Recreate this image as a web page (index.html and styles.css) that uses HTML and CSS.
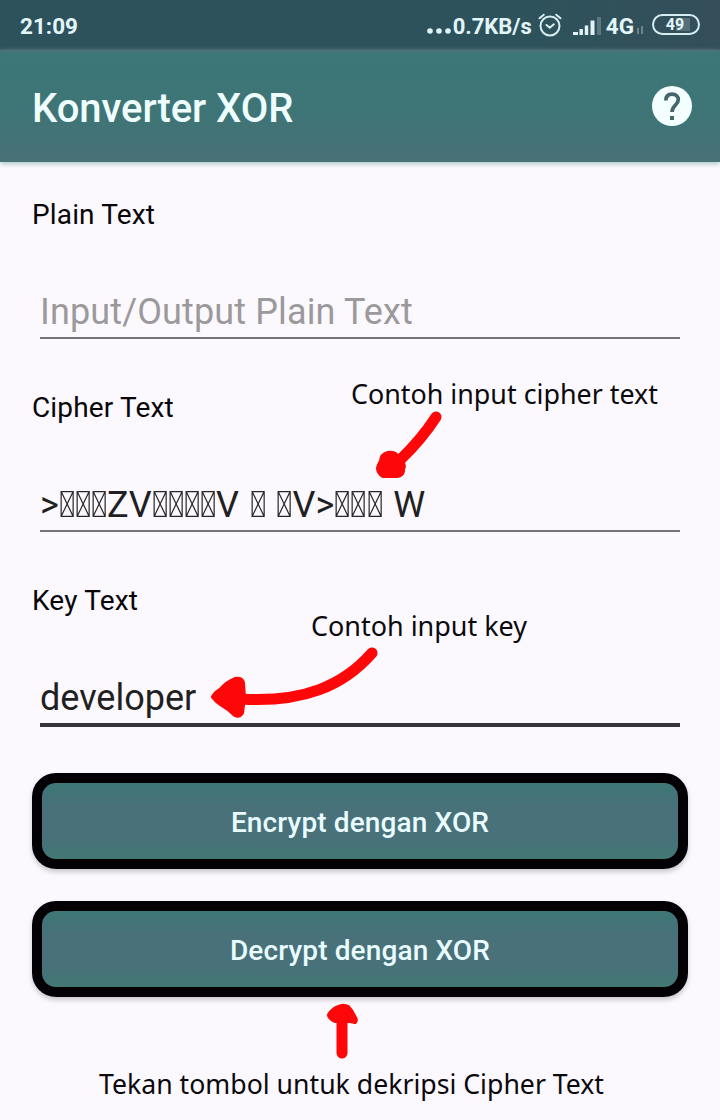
FILE: index.html
```html
<!DOCTYPE html>
<html lang="id">
<head>
<meta charset="utf-8">
<title>Konverter XOR</title>
<link rel="stylesheet" href="styles.css">
</head>
<body>
<svg class="defs" width="0" height="0"><defs><symbol id="tofu" viewBox="0 0 16 26"><path d="M2.1.6h12v24.8h-12zM2.1.6l12 24.8M14.1.6l-12 24.8" fill="none" stroke="#292529" stroke-width="1.2"/></symbol></defs></svg>
<div class="screen">
  <header class="status">
    <span class="clock">21:09</span>
    <svg class="dots" width="24" height="8" fill="#ddf3f7"><circle cx="3" cy="4" r="2.8"/><circle cx="12" cy="4" r="2.8"/><circle cx="21" cy="4" r="2.8"/></svg>
    <span class="speed">0.7KB/s</span>
    <svg class="alarm" width="24" height="24" fill="none" stroke="#d8eff4" stroke-width="2" stroke-linecap="round"><circle cx="12" cy="13" r="9.5"/><path d="M8.5 12l3.3 2.7 4-3.4M1.5 5.2l4.3-3.4M22.5 5.2l-4.3-3.4"/></svg>
    <svg class="signal" width="28" height="20" fill="#e0f3f7"><path d="M0 16h5v3H0zM6.5 13h3.4v6H6.5zM11.8 9.5h3.4v9.5h-3.4zM17.5 4.5h4v14.5h-4z"/><path d="M24 1h4v18h-4z" fill="#5b7780"/></svg>
    <span class="network">4G</span>
    <svg class="activity" width="8" height="10" fill="#6b858d"><path d="M1 3h2v6H1zM5 1h2v8H5z"/></svg>
    <span class="battery"><span class="charge">49</span></span>
  </header>
  <div class="appbar">
    <h1>Konverter XOR</h1>
    <svg class="help" width="40" height="40"><circle cx="20" cy="20" r="20" fill="#f3feff"/><path d="M13.8 14.5C14 10.2 16.4 8.2 20 8.2c3.7 0 6.3 2.2 6.3 5.6 0 5-6.300 5.700-6.300 12.300" fill="none" stroke="#46646c" stroke-width="3.7"/><path d="M18 30h4v4h-4z" fill="#46646c"/></svg>
  </div>
  <main>
    <section class="field"><div class="label">Plain Text</div><div class="input hint">Input/Output Plain Text</div></section>
    <section class="field"><div class="label">Cipher Text</div><div class="input cipher">&gt;<svg><use href="#tofu"/></svg><svg><use href="#tofu"/></svg><svg><use href="#tofu"/></svg>ZV<svg><use href="#tofu"/></svg><svg><use href="#tofu"/></svg><svg><use href="#tofu"/></svg><svg><use href="#tofu"/></svg>V <svg><use href="#tofu"/></svg> <svg><use href="#tofu"/></svg>V&gt;<svg><use href="#tofu"/></svg><svg><use href="#tofu"/></svg><svg><use href="#tofu"/></svg> W</div></section>
    <section class="field active"><div class="label">Key Text</div><div class="input">developer</div></section>
    <button>Encrypt dengan XOR</button>
    <button>Decrypt dengan XOR</button>
  </main>
  <svg class="notes" viewBox="0 0 720 1120">
    <g class="arrow">
      <path d="M436 417Q422 439 399 461" class="stroke"/>
      <path d="M378 468q1-4 3-7 0-6 7-8 7-1 10 4l4 4q3 5 1 8 1 6-6 7h-14q-5-3-5-8z" class="head"/>
      <path d="M372 653C343 686 303 703 240 699" class="stroke"/>
      <path d="M213 697q2-4 7-7 7-8 15-11 7-1 8 4l1 15-2 15q-3 4-7 2-6-6-13-10-6-4-9-8z" class="head"/>
      <path d="M342 1053V1022" class="stroke"/>
      <path d="M329 1015q1-3 7-7 7-4 12-1 4 4 6 9 3 4 1 6l-5-1h-15q-6-3-6-6z" class="head"/>
    </g>
    <text x="351" y="404" textLength="307" lengthAdjust="spacingAndGlyphs">Contoh input cipher text</text>
    <text x="311" y="636" textLength="216" lengthAdjust="spacingAndGlyphs">Contoh input key</text>
    <text x="99" y="1094" textLength="505" lengthAdjust="spacingAndGlyphs">Tekan tombol untuk dekripsi Cipher Text</text>
  </svg>
</div>
</body>
</html>
```
FILE: styles.css
```css
body { margin: 0; }
.defs { position: absolute; }
.screen {
  position: relative;
  width: 720px;
  height: 1120px;
  overflow: hidden;
  background: #fcf9fe;
  font-family: Roboto, sans-serif;
}
.status {
  display: flex;
  align-items: center;
  box-sizing: border-box;
  height: 50px;
  padding: 2px 20px 0;
  background: linear-gradient(90deg, #2e525b, #2e525b 75%, #344e5a);
  color: #e2f6fa;
  font-size: 22.5px;
  font-weight: 700;
}
.dots { margin: 9px 2px 0 auto; }
.speed { font-size: 22px; }
.alarm { margin: -2px 11px 0 6px; }
.signal { margin: 0 5px 0 0; }
.activity { margin: 8px 8px 0 2px; }
.battery {
  box-sizing: border-box;
  width: 48px;
  height: 21px;
  margin-top: -3px;
  padding: 2px;
  border: 2px solid #d5edf2;
  border-radius: 11px;
}
.charge {
  display: block;
  height: 13px;
  border-radius: 7px;
  background: linear-gradient(90deg, transparent 50%, #54707a 50%, #54707a 85%, transparent 85%);
  font-size: 16px;
  line-height: 14px;
  text-align: center;
  text-indent: -2px;
}
.appbar {
  display: flex;
  align-items: center;
  justify-content: space-between;
  box-sizing: border-box;
  height: 112px;
  padding: 0 28px 0 32px;
  border-top: 2px solid #4b727b;
  background: linear-gradient(180deg, #3d7778, #3e7576 50%, #487178);
  box-shadow: 0 2px 5px #a8c9c5;
}
.help { margin-top: -2px; }
h1 {
  margin: 4px 0 0;
  color: #eefeff;
  font-size: 40px;
  font-weight: 500;
  line-height: 48px;
  letter-spacing: -.06px;
}
main {
  display: flex;
  flex-direction: column;
  padding: 34px 32px 0;
}
.field { height: 193px; }
.field.active { height: 191px; }
.label {
  color: #080609;
  font-size: 28px;
  line-height: 38px;
  letter-spacing: .15px;
}
.input {
  height: 50px;
  margin: 53px 8px 0;
  border-bottom: 2px solid #77727a;
  color: #221f22;
  font-size: 36px;
  line-height: 50px;
  white-space: nowrap;
}
.hint { color: #9b999c; letter-spacing: .13px; }
.cipher { word-spacing: 1.8px; }
.cipher svg {
  width: 16.1px;
  height: 26px;
  vertical-align: baseline;
}
.active .input { border-bottom: 4px solid #353438; }
button {
  height: 96px;
  margin: 0 0 32px;
  padding: 2px 0 0;
  border: 10px solid #020004;
  border-radius: 24px;
  background: linear-gradient(180deg, #3e7776, #48717a 30%, #48717a 70%, #437873);
  box-shadow: 0 3px 5px #0003;
  color: #e9fcff;
  font-family: Roboto, sans-serif;
  font-size: 28px;
  font-weight: 500;
  letter-spacing: .12px;
}
.notes {
  position: absolute;
  inset: 0;
  width: 720px;
  height: 1120px;
}
.notes text {
  fill: #0b090d;
  font: 27px "Noto Sans", sans-serif;
}
.arrow { fill: #fd0709; filter: blur(.7px); }
.head {
  stroke: #fd0709;
  stroke-width: 4px;
  stroke-linejoin: round;
}
.stroke {
  fill: none;
  stroke: #fd0709;
  stroke-width: 11px;
  stroke-linecap: round;
}
```
